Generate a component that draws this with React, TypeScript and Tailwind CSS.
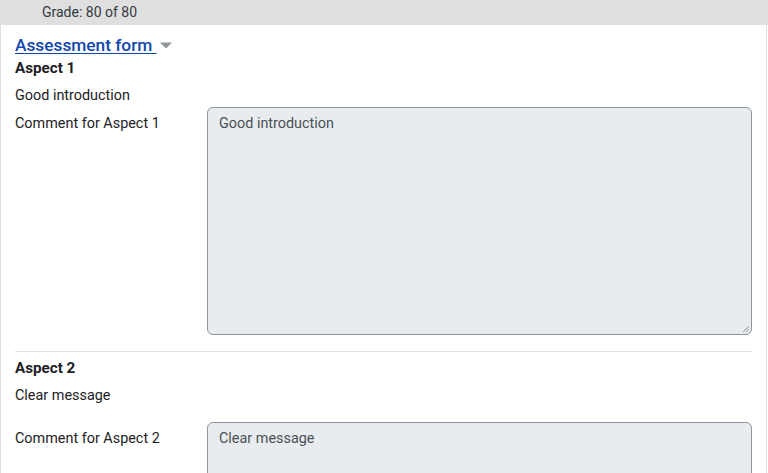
import React from "react";

function Caret() {
  return (
    <svg width="12" height="8" viewBox="0 0 12 8" className="inline-block ml-[3px] mb-[3px]">
      <path d="M0 1.5 L12 1.5 L6 7.5 Z" fill="#8f959e" />
    </svg>
  );
}

function Aspect({
  title,
  desc,
  comment,
  label,
  descGap,
  taHeight,
}: {
  title: string;
  desc: string;
  comment: string;
  label: string;
  descGap: string;
  taHeight: string;
}) {
  return (
    <div>
      <div className="font-bold text-[15.2px] leading-[23px] text-[#1d2125]">{title}</div>
      <div className="text-[14.4px] leading-[23px] text-[#1d2125] mt-[4px]">{desc}</div>
      <div className={`flex ${descGap}`}>
        <div className="w-[192px] shrink-0 pt-[5px] text-[14.4px] leading-[23px] text-[#1d2125]">{label}</div>
        <div
          className={`w-[545px] ${taHeight} bg-[#e9ecef] border border-[#8f959e] rounded-[6px] px-[11px] pt-[4px] text-[14.4px] leading-[23px] text-[#495057] relative`}
        >
          {comment}
          <svg width="8" height="8" viewBox="0 0 8 8" className="absolute right-[1px] bottom-[1px]">
            <path d="M7 1 L1 7 M7 4 L4 7" stroke="#8f959e" strokeWidth="1" />
          </svg>
        </div>
      </div>
    </div>
  );
}

export default function App() {
  return (
    <div className="w-[768px] h-[473px] overflow-hidden bg-white" style={{ fontFamily: "Roboto, 'Liberation Sans', sans-serif" }}>
      <div className="h-[25px] bg-[#dfdfdf] pl-[42px] text-[14px] leading-[25px] text-[#343a40]">Grade: 80 of 80</div>
      <div className="w-[767px] border-l border-r border-[#dfdfdf] pl-[14px] pr-[14px] pt-[8px] h-[448px]">
        <div className="text-[17.3px] leading-[24px] font-medium">
          <span className="text-[#0f47ad] underline decoration-1 underline-offset-[2px]">Assessment form </span>
          <Caret />
        </div>
        <Aspect
          title="Aspect 1"
          desc="Good introduction"
          comment="Good introduction"
          label="Comment for Aspect 1"
          descGap="mt-[0px]"
          taHeight="h-[228px]"
        />
        <div className="border-t border-[#dee2e6] mt-[16px] mb-[5px] w-[737px]" />
        <Aspect
          title="Aspect 2"
          desc="Clear message"
          comment="Clear message"
          label="Comment for Aspect 2"
          descGap="mt-[15px]"
          taHeight="h-[228px]"
        />
      </div>
    </div>
  );
}
